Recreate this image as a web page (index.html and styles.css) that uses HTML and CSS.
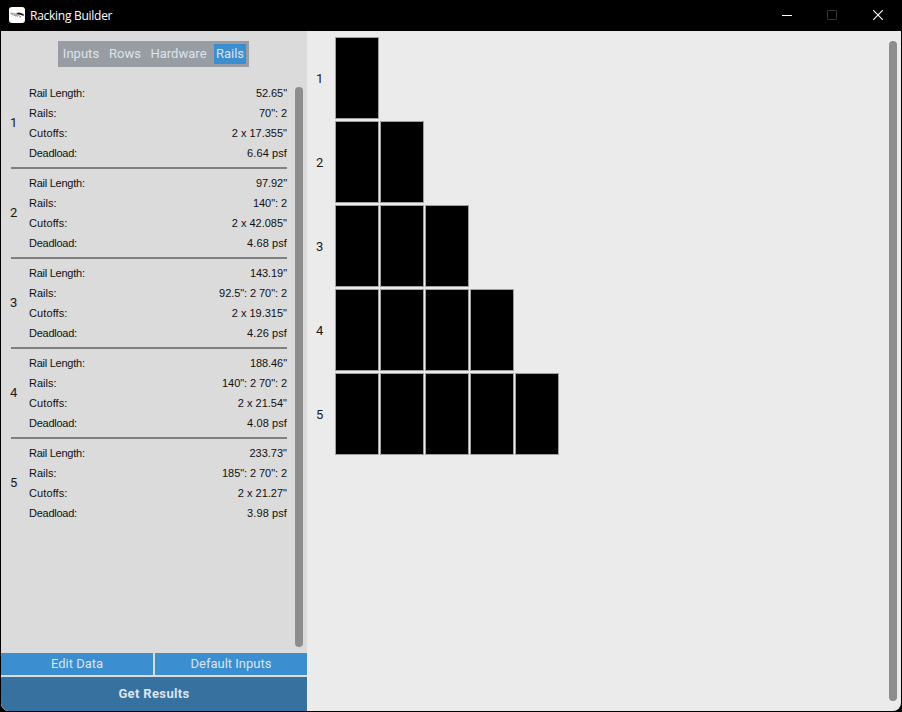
FILE: index.html
```
<!DOCTYPE html>
<html lang="en">
<head>
<meta charset="utf-8">
<title>Racking Builder</title>
<link rel="stylesheet" href="styles.css">
</head>
<body>
<div class="window">
  <header class="titlebar">
    <svg class="logo" width="16" height="16" viewBox="0 0 16 16"><rect width="16" height="16" rx="3" fill="#fff"/><path d="M7 6.2 10 5.4l4.6 1.6v2l-3-1.2-2.2-.4z" fill="#111"/><path d="M1.2 6.2l4 .3 2.8 1M2 6.8l4.5 2.2 2-1M5 7.4l4 2.2M8 7.4l4 2.4-2 .2" stroke="#777" stroke-width=".7" fill="none"/></svg>
    <h1 class="title">Racking Builder</h1>
    <div class="controls">
      <svg width="10" height="10" viewBox="0 0 10 10"><path d="M0 5.5h10" stroke="#fff"/></svg>
      <svg width="10" height="10" viewBox="0 0 10 10"><rect x=".5" y=".5" width="9" height="9" rx=".6" fill="none" stroke="#383838"/></svg>
      <svg width="10" height="10" viewBox="0 0 10 10"><path d="M.2.2l9.6 9.6M9.8.2.2 9.8" stroke="#fff" stroke-width="1.1"/></svg>
    </div>
  </header>
  <main class="content">
    <aside class="sidebar">
      <nav class="tabs"><span class="tab t1">Inputs</span><span class="tab t2">Rows</span><span class="tab t3">Hardware</span><span class="tab active">Rails</span></nav>
      <div class="scroll">
        <div class="list">
          <section class="item"><div class="num">1</div><dl><dt class="tight">Rail Length:</dt><dd class="inches">52.65"</dd><dt>Rails:</dt><dd class="inches">70": 2</dd><dt class="wide">Cutoffs:</dt><dd>2 x 17.355"</dd><dt class="tight">Deadload:</dt><dd class="wide">6.64 psf</dd></dl></section>
          <section class="item"><div class="num">2</div><dl><dt class="tight">Rail Length:</dt><dd class="inches">97.92"</dd><dt>Rails:</dt><dd class="inches">140": 2</dd><dt class="wide">Cutoffs:</dt><dd>2 x 42.085"</dd><dt class="tight">Deadload:</dt><dd class="wide">4.68 psf</dd></dl></section>
          <section class="item"><div class="num">3</div><dl><dt class="tight">Rail Length:</dt><dd class="inches">143.19"</dd><dt>Rails:</dt><dd class="inches">92.5": 2 70": 2</dd><dt class="wide">Cutoffs:</dt><dd>2 x 19.315"</dd><dt class="tight">Deadload:</dt><dd class="wide">4.26 psf</dd></dl></section>
          <section class="item"><div class="num">4</div><dl><dt class="tight">Rail Length:</dt><dd class="inches">188.46"</dd><dt>Rails:</dt><dd class="inches">140": 2 70": 2</dd><dt class="wide">Cutoffs:</dt><dd>2 x 21.54"</dd><dt class="tight">Deadload:</dt><dd class="wide">4.08 psf</dd></dl></section>
          <section class="item"><div class="num">5</div><dl><dt class="tight">Rail Length:</dt><dd>233.73"</dd><dt>Rails:</dt><dd class="inches">185": 2 70": 2</dd><dt class="wide">Cutoffs:</dt><dd>2 x 21.27"</dd><dt class="tight">Deadload:</dt><dd class="wide">3.98 psf</dd></dl></section>
        </div>
        <div class="bar"></div>
      </div>
      <div class="actions">
        <button>Edit Data</button><button>Default Inputs</button>
        <button class="results">Get Results</button>
      </div>
    </aside>
    <section class="canvas">
      <div class="rows">
        <div class="row"><span class="num">1</span><i></i></div>
        <div class="row"><span class="num">2</span><i></i><i></i></div>
        <div class="row"><span class="num">3</span><i></i><i></i><i></i></div>
        <div class="row"><span class="num">4</span><i></i><i></i><i></i><i></i></div>
        <div class="row"><span class="num">5</span><i></i><i></i><i></i><i></i><i></i></div>
      </div>
      <div class="bar"></div>
    </section>
  </main>
</div>
</body>
</html>
```
FILE: styles.css
```
* { box-sizing: border-box; }
body { margin: 0; background: #000; overflow: hidden; font-family: Roboto, sans-serif; font-size: 13px; color: #1a1a1a; }
.window { width: 902px; height: 712px; display: flex; flex-direction: column; padding: 0 1px 1px; background: #000; }
.titlebar { height: 31px; flex: none; display: flex; align-items: center; padding-left: 8px; padding-right: 18px; }
.logo { display: block; position: relative; top: -1px; }
.title { margin: 0 0 0 5px; font: 400 12px/16px "Open Sans", "Noto Sans", sans-serif; letter-spacing: -0.27px; color: #fff; padding-top: 1px; }
.controls { width: 101px; margin-left: auto; display: grid; grid-template-columns: 45px 46px 10px; position: relative; top: -1px; }
.controls svg { display: block; }
.content { flex: 1; display: flex; min-height: 0; background: #ebebeb; border-radius: 0 0 8px 8px; overflow: hidden; }
.sidebar { width: 306px; flex: none; background: #dbdbdb; display: flex; flex-direction: column; }
.tabs { width: 191px; height: 26px; margin: 10px 0 0 57px; padding: 3px; background: #979da2; display: flex; color: #dce4ee; line-height: 20px; text-align: center; }
.tab { white-space: nowrap; letter-spacing: 0.02px; }
.t1 { width: 40px; }
.t2 { width: 48px; }
.t3 { width: 59px; margin-right: 6px; }
.active { width: 32px; background: #3b8ed0; }
.scroll { flex: 1; display: flex; padding: 16px 4px 6px 10px; }
.list { width: 276px; }
.item { height: 90px; display: flex; border-bottom: 2px solid #808080; padding-top: 4px; }
.item:first-child { height: 86px; padding-top: 0; }
.item:last-child { border: 0; }
.item .num { width: 18px; height: 80px; line-height: 79px; text-indent: -1px; }
dl { flex: 1; margin: 0; display: grid; grid-template-columns: auto 1fr; grid-auto-rows: 20px; font: 11px/20px "Liberation Sans", sans-serif; color: #101010; }
dd { margin: 0; text-align: right; }
.tight { letter-spacing: -0.25px; }
.inches { letter-spacing: -0.07px; }
.wide { letter-spacing: 0.1px; }
.bar { background: #8d8d8d; width: 8px; border-radius: 4px; }
.scroll .bar { margin: 4px 0 0 auto; }
.actions { display: grid; grid-template-columns: 152px 152px; grid-template-rows: 22px 34px; gap: 2px; }
button { border: 0; padding: 0; background: #3b8ed0; color: #dce4ee; font: 13px/20px Roboto, sans-serif; }
.results { grid-column: span 2; background: #36719f; font-weight: 700; letter-spacing: 0.35px; }
.canvas { flex: 1; display: flex; padding: 6px 4px 10px 9px; }
.rows { flex: 1; display: flex; flex-direction: column; gap: 2px; }
.row { display: flex; gap: 1px; height: 82px; }
.row .num { width: 18px; line-height: 84px; }
.row i { width: 44px; background: #000; border: 1px solid #a0a0a0; }
.canvas .bar { margin-top: 4px; }
```
